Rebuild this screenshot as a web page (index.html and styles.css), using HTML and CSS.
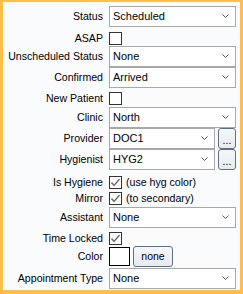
FILE: index.html
```html
<!DOCTYPE html>
<html>
<head>
<meta charset="utf-8">
<link rel="stylesheet" href="styles.css">
</head>
<body>
<div class="panel">
  <div class="row r-status"><span class="lbl">Status</span><div class="combo"><span class="val">Scheduled</span><svg class="chev" width="7" height="4" viewBox="0 0 7 4"><polyline points="0.5,0.5 3.5,3.5 6.5,0.5"/></svg></div></div>
  <div class="row cbrow r-asap"><span class="lbl">ASAP</span><div class="cbwrap"><span class="cb"></span></div></div>
  <div class="row r-unsched"><span class="lbl">Unscheduled Status</span><div class="combo"><span class="val">None</span><svg class="chev" width="7" height="4" viewBox="0 0 7 4"><polyline points="0.5,0.5 3.5,3.5 6.5,0.5"/></svg></div></div>
  <div class="row r-conf"><span class="lbl">Confirmed</span><div class="combo"><span class="val">Arrived</span><svg class="chev" width="7" height="4" viewBox="0 0 7 4"><polyline points="0.5,0.5 3.5,3.5 6.5,0.5"/></svg></div></div>
  <div class="row cbrow r-newpat"><span class="lbl">New Patient</span><div class="cbwrap"><span class="cb"></span></div></div>
  <div class="row r-clinic"><span class="lbl">Clinic</span><div class="combo"><span class="val">North</span><svg class="chev" width="7" height="4" viewBox="0 0 7 4"><polyline points="0.5,0.5 3.5,3.5 6.5,0.5"/></svg></div></div>
  <div class="row r-prov"><span class="lbl">Provider</span><div class="pair"><div class="combo short"><span class="val">DOC1</span><svg class="chev" width="7" height="4" viewBox="0 0 7 4"><polyline points="0.5,0.5 3.5,3.5 6.5,0.5"/></svg></div><button class="btn dots">...</button></div></div>
  <div class="row r-hyg"><span class="lbl">Hygienist</span><div class="pair"><div class="combo short"><span class="val">HYG2</span><svg class="chev" width="7" height="4" viewBox="0 0 7 4"><polyline points="0.5,0.5 3.5,3.5 6.5,0.5"/></svg></div><button class="btn dots">...</button></div></div>
  <div class="row cbrow r-ishyg"><span class="lbl">Is Hygiene</span><div class="cbwrap"><span class="cb checked"><svg width="11" height="11" viewBox="0 0 11 11"><polyline points="1.5,5.5 4,8.5 9.5,2"/></svg></span><span class="cbtext">(use hyg color)</span></div></div>
  <div class="row cbrow r-mirror"><span class="lbl">Mirror</span><div class="cbwrap"><span class="cb checked"><svg width="11" height="11" viewBox="0 0 11 11"><polyline points="1.5,5.5 4,8.5 9.5,2"/></svg></span><span class="cbtext">(to secondary)</span></div></div>
  <div class="row r-asst"><span class="lbl">Assistant</span><div class="combo"><span class="val">None</span><svg class="chev" width="7" height="4" viewBox="0 0 7 4"><polyline points="0.5,0.5 3.5,3.5 6.5,0.5"/></svg></div></div>
  <div class="row cbrow r-lock"><span class="lbl">Time Locked</span><div class="cbwrap"><span class="cb checked"><svg width="11" height="11" viewBox="0 0 11 11"><polyline points="1.5,5.5 4,8.5 9.5,2"/></svg></span></div></div>
  <div class="row r-color"><span class="lbl">Color</span><div class="pair"><span class="swatch"></span><button class="btn none">none</button></div></div>
  <div class="row r-appt"><span class="lbl">Appointment Type</span><div class="combo"><span class="val">None</span><svg class="chev" width="7" height="4" viewBox="0 0 7 4"><polyline points="0.5,0.5 3.5,3.5 6.5,0.5"/></svg></div></div>
</div>
</body>
</html>
```

FILE: styles.css
```css
html, body {
  margin: 0;
  padding: 0;
  background: #fdbf4a;
}
.panel {
  width: 237px;
  height: 288px;
  margin: 2px 3px 0 3px;
  background: #fafbfd;
  padding-top: 4px;
  box-sizing: border-box;
  font-family: "Liberation Sans", Arial, sans-serif;
  font-size: 10.6px;
  color: #000;
}
.row {
  display: grid;
  grid-template-columns: 100px 1fr;
  column-gap: 6px;
  align-items: center;
  height: 21px;
}
.cbrow { height: 13px; }
.lbl {
  text-align: right;
  white-space: nowrap;
  line-height: 13px;
}
.combo {
  position: relative;
  width: 127px;
  height: 21px;
  box-sizing: border-box;
  border: 1px solid #a8a8a8;
  background: #fff;
  display: flex;
  align-items: center;
  padding-left: 3px;
  font-size: 11px;
}
.combo.short { width: 106px; }
.val { line-height: 13px; }
.chev {
  position: absolute;
  right: 6px;
  top: 7px;
  fill: none;
  stroke: #555;
  stroke-width: 1;
}
.pair {
  display: flex;
  align-items: center;
  gap: 2px;
}
.btn {
  font-family: "Liberation Sans", Arial, sans-serif;
  font-size: 10.5px;
  color: #000;
  box-sizing: border-box;
  border: 1px solid #5f6f84;
  border-radius: 3px;
  background: linear-gradient(#f6f7f9, #e8eaee);
  padding: 0;
  margin: 0;
  height: 21px;
  line-height: 17px;
}
.dots { width: 18px; margin-left: 1px; padding-top: 3px; }
.none { width: 40px; }
.swatch {
  width: 21px;
  height: 19px;
  box-sizing: border-box;
  border: 1px solid #000;
  background: #fff;
  margin-right: 1px;
}
.cbwrap {
  display: flex;
  align-items: center;
  gap: 4px;
}
.cb {
  width: 13px;
  height: 13px;
  box-sizing: border-box;
  border: 1px solid #333;
  background: #fff;
  display: flex;
  align-items: center;
  justify-content: center;
}
.cb svg {
  fill: none;
  stroke: #6b6b6b;
  stroke-width: 1.4;
}
.cbtext { line-height: 13px; }

.r-asap { margin-top: 5px; }
.r-unsched { margin-top: 1px; }
.r-conf { margin-top: 0; }
.r-newpat { margin-top: 4px; }
.r-clinic { margin-top: 2px; }
.r-prov { margin-top: 0; }
.r-hyg { margin-top: 0; }
.r-ishyg { margin-top: 6px; }
.r-mirror { margin-top: 3px; }
.r-asst { margin-top: 2px; }
.r-lock { margin-top: 4px; }
.r-color { margin-top: 1px; }
.r-appt { margin-top: 1px; }
```
